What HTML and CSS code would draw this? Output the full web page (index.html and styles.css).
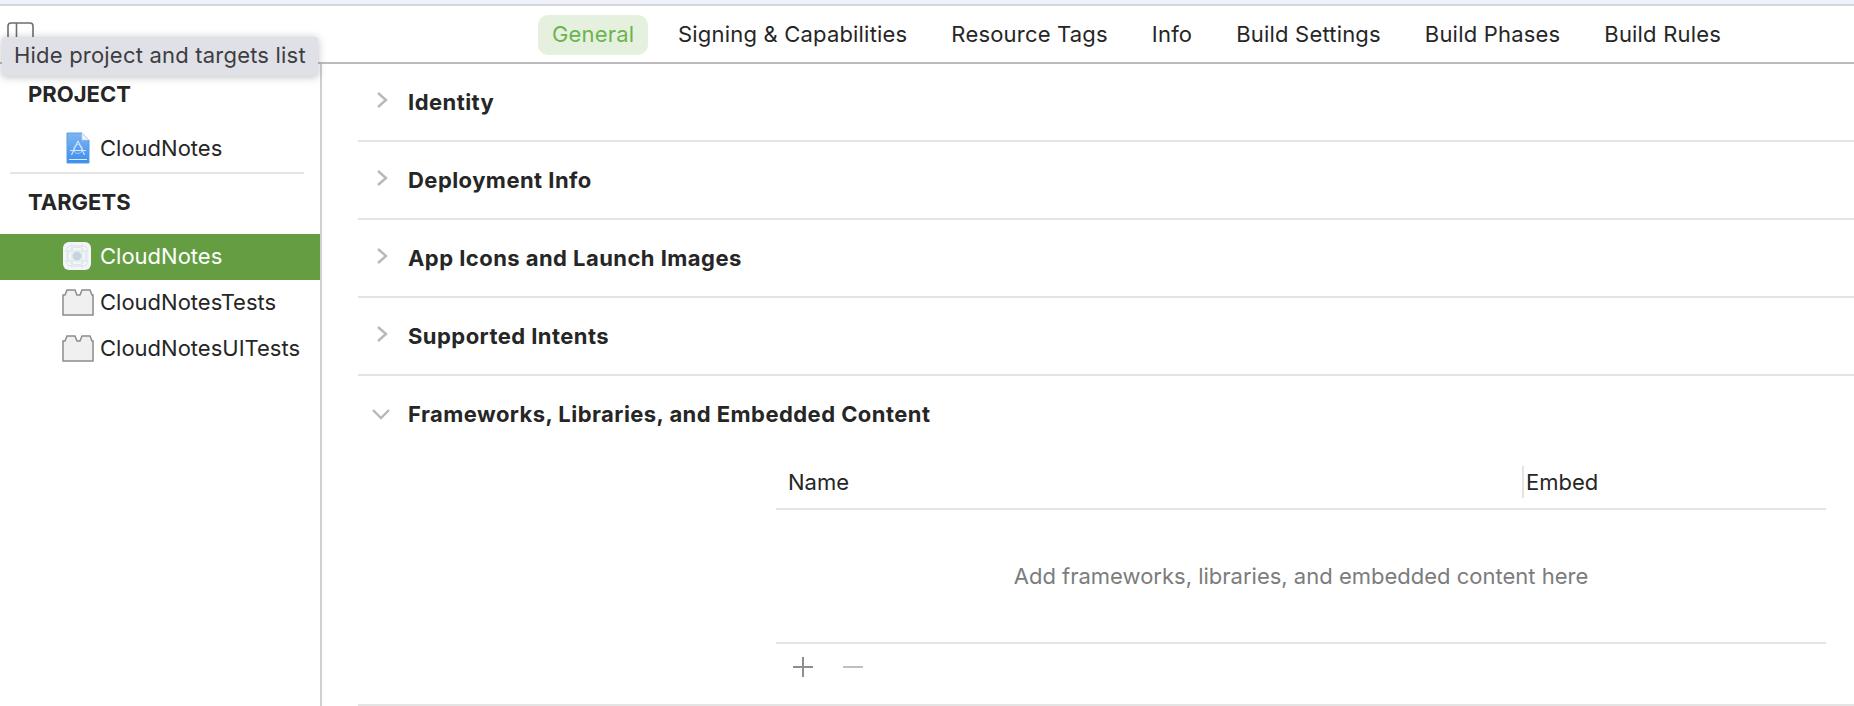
FILE: index.html
```html
<!DOCTYPE html>
<html lang="en">
<head>
    <meta charset="UTF-8">
    <title>CloudNotes - General</title>
    <link rel="stylesheet" href="styles.css">
</head>
<body>
<div class="top-strip"></div>
<header class="tab-bar">
    <svg class="toggle-icon" width="28" height="24" viewBox="0 0 28 24">
        <rect x="1" y="1" width="25" height="22" rx="3" fill="none" stroke="#6e6e72" stroke-width="1.6"/>
        <line x1="9.500" y1="1" x2="9.500" y2="23" stroke="#6e6e72" stroke-width="1.6"/>
    </svg>
    <nav class="tabs">
        <a class="tab active">General</a>
        <a class="tab">Signing &amp; Capabilities</a>
        <a class="tab">Resource Tags</a>
        <a class="tab">Info</a>
        <a class="tab">Build Settings</a>
        <a class="tab">Build Phases</a>
        <a class="tab">Build Rules</a>
    </nav>
</header>

<div class="tooltip">Hide project and targets list</div>

<div class="layout">
    <aside class="sidebar">
        <h3 class="side-title project-title">PROJECT</h3>
        <div class="side-item">
            <svg class="side-icon" width="30" height="32" viewBox="0 0 30 32">
                <defs>
                    <linearGradient id="doc-blue" x1="0" y1="0" x2="0" y2="1">
                        <stop offset="0" stop-color="#7fb6f3"/>
                        <stop offset="1" stop-color="#3a8dee"/>
                    </linearGradient>
                </defs>
                <path d="M5 1H20L27 8V31H5Z" fill="url(#doc-blue)" stroke="#5a9be6"/>
                <path d="M20 1V8H27Z" fill="#eef3fa" stroke="#c4d4e6" stroke-width=".6"/>
                <path d="M7 27.500H25" stroke="#dcebfc" stroke-width="1"/>
                <g fill="none" stroke="#d6e7fb" stroke-width="1.100">
                    <path d="M16 9 9.500 23M16 9 22.500 23M8 18.500H24"/>
                    <circle cx="16" cy="17" r="4.500" stroke-width=".6"/>
                </g>
            </svg>
            <span>CloudNotes</span>
        </div>
        <div class="side-divider"></div>
        <h3 class="side-title targets-title">TARGETS</h3>
        <div class="side-item selected">
            <svg class="side-icon" width="30" height="30" viewBox="0 0 30 30">
                <rect x="1" y="1" width="28" height="28" rx="6" fill="#f3f6f8"/>
                <g fill="none" stroke="#dbe3e8" stroke-width="1">
                    <rect x="5" y="5" width="20" height="20" rx="3"/>
                    <circle cx="15" cy="15" r="9"/>
                    <path d="M10 3V27M20 3V27M3 10H27M3 20H27"/>
                </g>
                <circle cx="15" cy="15" r="4.500" fill="#c5d5de"/>
            </svg>
            <span>CloudNotes</span>
        </div>
        <div class="side-item">
            <svg class="side-icon" width="32" height="28" viewBox="0 0 32 28">
                <path class="brick" d="M1 7H3L5 2H13L15 7H18L20 2H28L30 7H31V27H1Z"/>
            </svg>
            <span>CloudNotesTests</span>
        </div>
        <div class="side-item">
            <svg class="side-icon" width="32" height="28" viewBox="0 0 32 28">
                <path class="brick" d="M1 7H3L5 2H13L15 7H18L20 2H28L30 7H31V27H1Z"/>
            </svg>
            <span>CloudNotesUITests</span>
        </div>
    </aside>

    <main class="content">
        <section class="section">
            <div class="section-head">
                <svg class="chevron" width="14" height="18" viewBox="0 0 14 18"><path d="M3 2 11 9 3 16"/></svg>
                <h2>Identity</h2>
            </div>
        </section>
        <section class="section">
            <div class="section-head">
                <svg class="chevron" width="14" height="18" viewBox="0 0 14 18"><path d="M3 2 11 9 3 16"/></svg>
                <h2>Deployment Info</h2>
            </div>
        </section>
        <section class="section">
            <div class="section-head">
                <svg class="chevron" width="14" height="18" viewBox="0 0 14 18"><path d="M3 2 11 9 3 16"/></svg>
                <h2>App Icons and Launch Images</h2>
            </div>
        </section>
        <section class="section">
            <div class="section-head">
                <svg class="chevron" width="14" height="18" viewBox="0 0 14 18"><path d="M3 2 11 9 3 16"/></svg>
                <h2>Supported Intents</h2>
            </div>
        </section>
        <section class="section open">
            <div class="section-head">
                <svg class="chevron down" width="18" height="14" viewBox="0 0 18 14"><path d="M1 3 9 11 17 3"/></svg>
                <h2>Frameworks, Libraries, and Embedded Content</h2>
            </div>
            <div class="table">
                <div class="table-head">
                    <div class="col-name">Name</div>
                    <div class="col-embed">Embed</div>
                </div>
                <div class="table-empty">Add frameworks, libraries, and embedded content here</div>
                <div class="table-foot">
                    <svg width="22" height="22" viewBox="0 0 22 22"><path d="M11 1V21M1 11H21" stroke="#8e8e8e" stroke-width="2"/></svg>
                    <svg width="22" height="22" viewBox="0 0 22 22"><path d="M1 11H21" stroke="#c0c0c0" stroke-width="2"/></svg>
                </div>
            </div>
        </section>
    </main>
</div>
</body>
</html>
```

FILE: styles.css
```css
*,
*::before,
*::after {
    box-sizing: border-box;
}

html,
body {
    height: 100%;
}

body {
    margin: 0;
    overflow: hidden;
    font-family: Inter, "Liberation Sans", sans-serif;
    font-size: 22px;
    color: #262626;
    background-color: #ffffff;
}

.top-strip {
    height: 6px;
    background-color: #eef1fa;
    border-bottom: 2px solid #d6d6dd;
}

/* Tab bar */
.tab-bar {
    display: flex;
    height: 58px;
    padding: 9px 0 0 7px;
    border-bottom: 2px solid #bcbcbc;
}

.toggle-icon {
    margin-top: 7px;
}

.tabs {
    display: flex;
    gap: 16px;
    margin-left: 503px;
}

.tab {
    height: 40px;
    padding: 0 14px;
    line-height: 38px;
    letter-spacing: 0.19px;
    border-radius: 10px;
    white-space: nowrap;
}

.tab.active {
    width: 110px;
    color: #6cb44f;
    background-color: #e5f1de;
}

/* Tooltip over the sidebar top */
.tooltip {
    position: absolute;
    top: 37px;
    left: 2px;
    width: 316px;
    height: 39px;
    padding-left: 12px;
    line-height: 36px;
    letter-spacing: 0.2px;
    color: #3d3d42;
    white-space: nowrap;
    background-color: #e0e1e6;
    border-radius: 3px;
    box-shadow: 0 1px 8px rgba(0, 0, 0, 0.25);
}

.layout {
    display: flex;
    height: 642px;
}

/* Sidebar */
.sidebar {
    flex: 0 0 322px;
    border-right: 2px solid #d0d0d4;
}

.side-title {
    margin: 0;
    padding-left: 28px;
    font-size: 22px;
    line-height: 28px;
    font-weight: 700;
}

.project-title {
    padding-top: 16px;
    height: 62px;
}

.targets-title {
    padding-top: 14px;
    height: 60px;
}

.side-item {
    display: flex;
    align-items: center;
    height: 46px;
    padding: 0 0 2px 100px;
    position: relative;
}

.side-item.selected {
    color: #ffffff;
    background-color: #659e42;
}

.side-icon {
    position: absolute;
    left: 62px;
    top: calc(50% - 1px);
    transform: translateY(-50%);
}

.brick {
    fill: #f0f0f0;
    stroke: #8c8c8c;
    stroke-width: 1.500;
}

.side-divider {
    height: 2px;
    margin: 0 16px 0 10px;
    background-color: #e4e4e4;
}

/* Sections */
.content {
    flex: 1;
    padding-left: 36px;
}

.section {
    height: 78px;
    border-bottom: 2px solid #e4e4e4;
}

.section.open {
    height: 330px;
}

.section-head {
    display: flex;
    align-items: center;
    height: 76px;
    position: relative;
    padding-left: 50px;
}

.section-head h2 {
    margin: 0;
    font-size: 22px;
    font-weight: 700;
    letter-spacing: 0.45px;
}

.chevron {
    position: absolute;
    left: 17px;
    top: 27px;
}

.chevron.down {
    left: 14px;
    top: 31px;
}

.chevron path {
    fill: none;
    stroke: #b8b8b8;
    stroke-width: 2.400;
}

/* Frameworks table */
.table {
    margin: 0 28px 0 418px;
}

.table-head {
    display: flex;
    align-items: center;
    height: 58px;
    padding-top: 4px;
    border-bottom: 2px solid #e4e4e4;
}

.col-name {
    flex: 0 0 746px;
    padding-left: 12px;
}

.col-embed {
    padding-left: 2px;
    line-height: 32px;
    border-left: 2px solid #e4e4e4;
}

.table-empty {
    display: flex;
    align-items: center;
    justify-content: center;
    height: 134px;
    color: #7c7c7c;
    border-bottom: 2px solid #e4e4e4;
}

.table-foot {
    display: flex;
    align-items: center;
    gap: 28px;
    height: 46px;
    padding-left: 16px;
}
```
